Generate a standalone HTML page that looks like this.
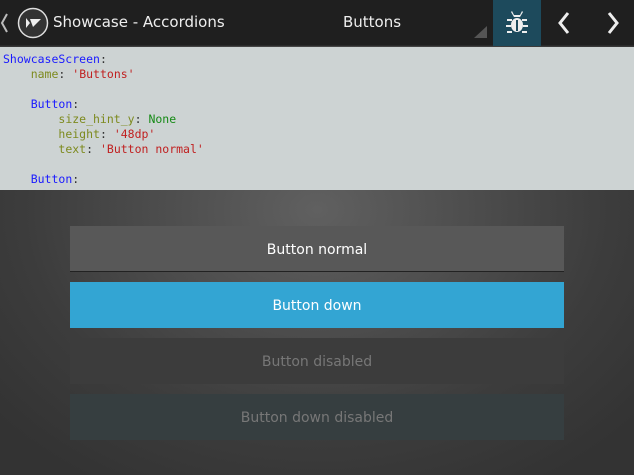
<!DOCTYPE html><html><head><style>
*{margin:0;padding:0;box-sizing:border-box}
body{width:634px;height:475px;overflow:hidden;background:radial-gradient(ellipse 420px 320px at 317px 210px,#606060,#3c3c3c 70%,#333);font-family:"DejaVu Sans","Liberation Sans",sans-serif;position:relative}
.top{position:absolute;left:0;top:0;width:634px;height:46px;background:#1f1f1f;border-bottom:1px solid #2a2a2a}
.t{position:absolute;color:#eee;font-size:15px;top:13px}
.code{position:absolute;left:0;top:47px;width:634px;height:143px;background:#cdd3d3;font-family:"DejaVu Sans Mono",monospace;font-size:11.5px;line-height:15px;padding:5px 0 0 3px;white-space:pre}
.b{color:#1a1aff}.o{color:#7d8a1e}.r{color:#c02020}.g{color:#168a16}.k{color:#333}
.btn{position:absolute;left:70px;width:494px;height:46px;text-align:center;line-height:48px;font-size:14px}
</style></head><body>
<div class="top">
<svg style="position:absolute;left:0;top:12px" width="10" height="22"><path d="M7 2 L2 11 L7 20" stroke="#bbb" stroke-width="2" fill="none"/></svg>
<svg style="position:absolute;left:17px;top:7px" width="32" height="32"><circle cx="16" cy="16" r="14.5" fill="#333" stroke="#ddd" stroke-width="1.5"/><path d="M9 11 L9 21 L13 16 Z M13 12 L16 20 L24 12 Z" fill="#eee"/></svg>
<div class="t" style="left:53px">Showcase - Accordions</div>
<div class="t" style="left:343px">Buttons</div>
<svg style="position:absolute;left:474px;top:26px" width="14" height="12"><path d="M13 0 L13 12 L0 12 Z" fill="#555"/></svg>
<div style="position:absolute;left:493px;top:0;width:48px;height:46px;background:#1d4a5c"></div>
<svg style="position:absolute;left:505px;top:9px" width="24" height="26" viewBox="0 0 24 26"><g fill="#eee"><path d="M6 3 L9 8 L15 8 L18 3 L17 2 L15 6 L9 6 L7 2Z"/><ellipse cx="12" cy="16" rx="6" ry="7"/><path d="M2 10h5v2H2zM17 10h5v2h-5zM1 16h5v2H1zM18 16h5v2h-5zM2 22h5v2H2zM17 22h5v2h-5z"/></g><path d="M11 11h2v11h-2z" fill="#1d4a5c"/></svg>
<svg style="position:absolute;left:556px;top:11px" width="16" height="24"><path d="M12 2 L4 12 L12 22" stroke="#eee" stroke-width="3" fill="none"/></svg>
<svg style="position:absolute;left:605px;top:11px" width="16" height="24"><path d="M4 2 L12 12 L4 22" stroke="#eee" stroke-width="3" fill="none"/></svg>
</div>
<div class="code"><span class="b">ShowcaseScreen</span><span class="k">:</span>
    <span class="o">name</span><span class="k">:</span> <span class="r">'Buttons'</span>

    <span class="b">Button</span><span class="k">:</span>
        <span class="o">size_hint_y</span><span class="k">:</span> <span class="g">None</span>
        <span class="o">height</span><span class="k">:</span> <span class="r">'48dp'</span>
        <span class="o">text</span><span class="k">:</span> <span class="r">'Button normal'</span>

    <span class="b">Button</span><span class="k">:</span></div>
<div class="btn" style="top:226px;background:#585858;color:#fff;border-bottom:1px solid #222">Button normal</div>
<div class="btn" style="top:282px;background:#33a5d3;color:#fff">Button down</div>
<div class="btn" style="top:338px;background:#3c3c3c;color:#777">Button disabled</div>
<div class="btn" style="top:394px;background:#363e40;color:#777">Button down disabled</div>
</body></html>
